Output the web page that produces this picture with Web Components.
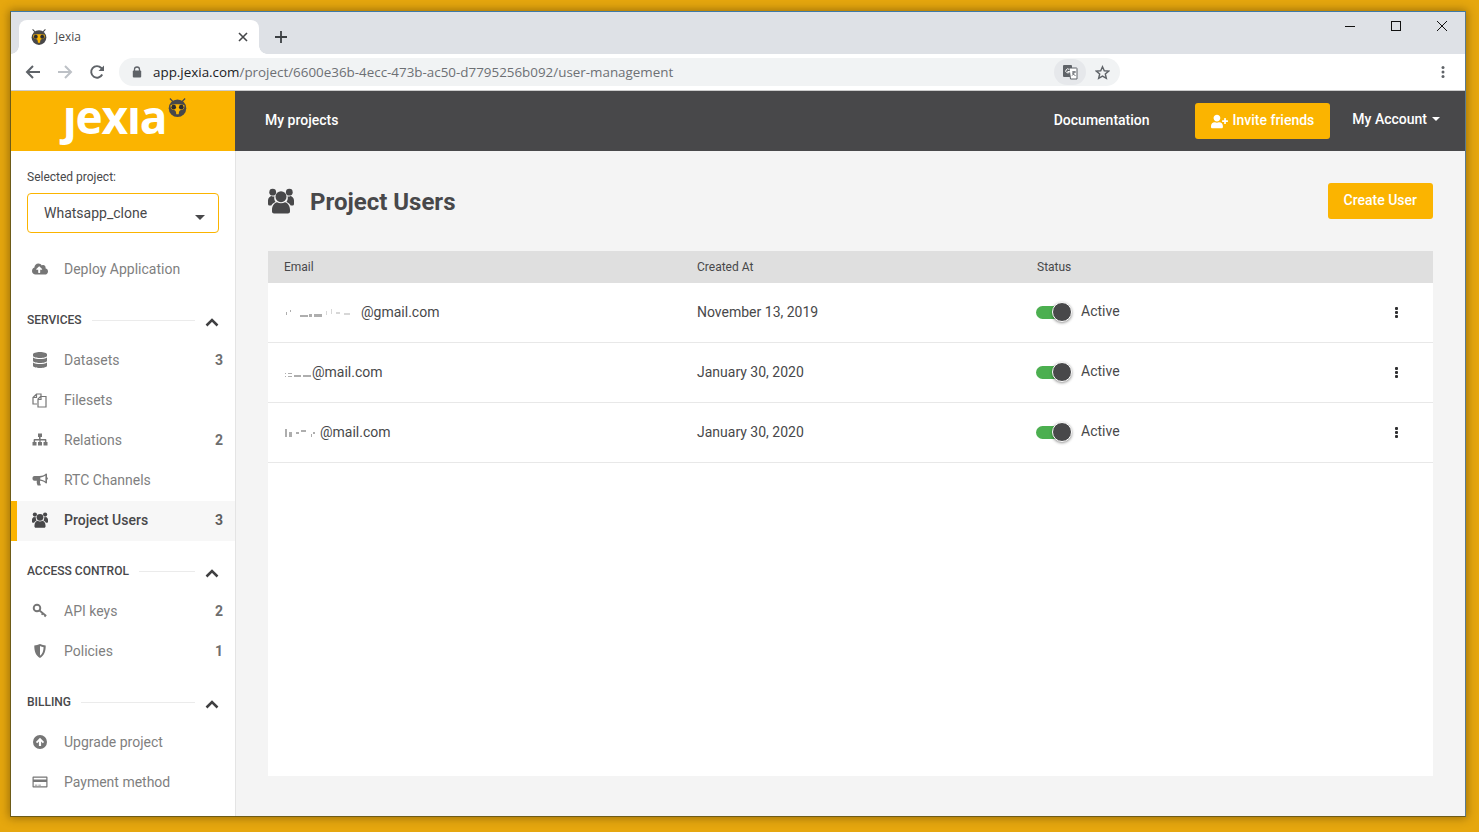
<!DOCTYPE html>
<html>
<head>
<meta charset="utf-8">
<title>Jexia</title>
<style>
  html, body { margin: 0; height: 100%; overflow: hidden; }
  body {
    background: #e6a70e;
    padding: 11px 0 0 10px;
    box-sizing: border-box;
    font-family: Roboto, "Liberation Sans", sans-serif;
  }
</style>
</head>
<body>
<app-window>
  <browser-tabs></browser-tabs>
  <browser-toolbar></browser-toolbar>
  <app-header></app-header>
  <app-body>
    <side-bar slot="side"></side-bar>
    <users-page slot="main"></users-page>
  </app-body>
</app-window>

<script>
const SIDE_BODY = 'M0 12c0-2.500 1.800-4.200 3.500-4.500.8.500 1.800.7 3 .5-.2.500-.3 1-.3 1.500 0 1.500.5 2.700 1.300 3.700C5.500 14.500 4 15.500 3.300 17H1.500C.5 17 0 16.300 0 15.500z';
const ICONS = {
  users: ['0 0 26 25', `<circle cx="4.700" cy="3.700" r="3.400"/><circle cx="21.300" cy="3.700" r="3.400"/><circle cx="13" cy="8.200" r="5.500"/>
    <path d="${SIDE_BODY}"/><path transform="matrix(-1 0 0 1 26 0)" d="${SIDE_BODY}"/>
    <path d="M4 21.500c0-4.500 2.500-7 5-7.700 1.200.7 2.500 1 4 1s2.800-.3 4-1c2.500.7 5 3.200 5 7.700V23c0 1.100-.9 2-2 2H6c-1.100 0-2-.9-2-2z"/>`],
  database: ['0 0 448 512', '<path d="M448 73.143v45.714C448 159.143 347.667 192 224 192S0 159.143 0 118.857V73.143C0 32.857 100.333 0 224 0s224 32.857 224 73.143zM448 176v102.857C448 319.143 347.667 352 224 352S0 319.143 0 278.857V176c48.125 33.143 136.208 48.572 224 48.572S399.874 209.143 448 176zm0 160v102.857C448 479.143 347.667 512 224 512S0 479.143 0 438.857V336c48.125 33.143 136.208 48.572 224 48.572S399.874 369.143 448 336z"/>'],
  cloud: ['0 0 640 512', '<path d="M537.6 226.6c4.1-10.7 6.4-22.4 6.4-34.6 0-53-43-96-96-96-19.7 0-38.1 6-53.3 16.2C367 64.2 315.3 32 256 32c-88.4 0-160 71.6-160 160 0 2.7.1 5.4.2 8.1C40.2 219.8 0 273.2 0 336c0 79.5 64.5 144 144 144h368c70.7 0 128-57.3 128-128 0-61.9-44-113.6-102.4-125.4zM393.4 288H328v112c0 8.8-7.2 16-16 16h-48c-8.8 0-16-7.2-16-16V288h-65.4c-14.3 0-21.4-17.2-11.3-27.3l105.4-105.4c6.2-6.2 16.4-6.2 22.6 0l105.4 105.4c10.1 10.1 2.9 27.3-11.3 27.3z"/>'],
  files: ['0 0 16 16', '<path fill="none" stroke="currentColor" stroke-width="1.200" d="M5 12H1V5.500L4.500 2H9v2.500M1 5.500h3.500V2M6 15V7l2.500-2.500H14V15zM6 7.500h3v-3"/>'],
  sitemap: ['0 0 16 16', '<path d="M6 1.500h4v3.600H8.600v2h5c.5 0 .8.300.8.800v2h1.100v3.600h-4V9.900h1.400V8.500H8.600v1.400H10v3.600H6V9.900h1.400V8.500H3.100v1.400h1.400v3.600h-4V9.900h1.100v-2c0-.5.300-.8.800-.8h4.600v-2H6z"/>'],
  bullhorn: ['0 0 16 16', '<path fill-rule="evenodd" d="M14.200 1.500c.5 0 .8.400.8.800v3c.6.200.9.700.9 1.200s-.3 1-.9 1.200v3c0 .5-.3.800-.8.800-.2 0-.4-.1-.5-.2C12.200 10 10.400 9 8 8.800v2c0 .6.300 1.200.7 1.700.3.400 0 1.100-.5 1.100H6.200c-.3 0-.6-.1-.7-.4-.4-.9-.8-1.800-.8-2.700 0-.6.100-1.200.2-1.700H2.500C1.400 8.800.500 8 .500 6.800V6c0-1.100.9-2 2-2h5c2.700 0 4.700-1 6.200-2.300.1-.1.300-.2.500-.2zm-.8 2.100C12 4.600 10.200 5.300 8.300 5.500v2.100c1.900.2 3.700.9 5.100 1.900z"/>'],
  key: ['0 0 16 16', '<circle cx="5" cy="5" r="3.300" fill="none" stroke="currentColor" stroke-width="1.900"/><path d="M7.500 7.500l6.700 5.500M11 10.200l-1.300 1.600M13.500 12.300l-1 1.300" fill="none" stroke="currentColor" stroke-width="1.800"/>'],
  shield: ['0 0 16 16', '<path fill-rule="evenodd" d="M8 1c2 .9 3.800 1.300 5.700 1.500.1 5.800-1.400 10-5.700 12.500-4.300-2.500-5.800-6.700-5.700-12.500C4.200 2.300 6 1.900 8 1zm0 2.100v9.700c2.500-1.900 3.500-4.900 3.600-8.500C10.800 4.100 9.300 3.700 8 3.100z"/>'],
  upgrade: ['0 0 16 16', '<path fill-rule="evenodd" d="M8 1a7 7 0 1 1 0 14A7 7 0 0 1 8 1zm0 2.800L3.900 7.900 5.200 9.200 6.900 7.500V12h2.200V7.500l1.700 1.700 1.300-1.300z"/>'],
  card: ['0 0 16 16', '<path fill-rule="evenodd" d="M1.500 2.500h13c.6 0 1 .4 1 1v9c0 .6-.4 1-1 1h-13c-.6 0-1-.4-1-1v-9c0-.6.4-1 1-1zm.2 1.200v1.800h12.600V3.700zm0 4.200v4.400h12.600V7.900zm1.100 2.900h2.600v.8H2.800zm3.500 0h2.600v.8H6.300z"/>'],
  userplus: ['0 0 640 512', '<path d="M624 208h-64v-64c0-8.800-7.200-16-16-16h-32c-8.800 0-16 7.200-16 16v64h-64c-8.800 0-16 7.200-16 16v32c0 8.800 7.200 16 16 16h64v64c0 8.800 7.200 16 16 16h32c8.800 0 16-7.200 16-16v-64h64c8.800 0 16-7.200 16-16v-32c0-8.800-7.200-16-16-16zm-400 48c70.700 0 128-57.300 128-128S294.700 0 224 0 96 57.300 96 128s57.300 128 128 128zm89.600 32h-16.700c-22.200 10.200-46.900 16-72.900 16s-50.600-5.800-72.900-16h-16.700C60.200 288 0 348.200 0 422.400V464c0 26.500 21.500 48 48 48h352c26.500 0 48-21.500 48-48v-41.600c0-74.200-60.200-134.400-134.400-134.400z"/>']
};

class JxIcon extends HTMLElement {
  connectedCallback() {
    const [box, body] = ICONS[this.getAttribute("name")];
    const size = this.getAttribute("size") || 16;
    this.attachShadow({mode: "open"}).innerHTML = `
      <style>
        :host { display: inline-flex; align-items: center; justify-content: center; width: ${size}px; height: ${size}px; }
        svg { width: 100%; height: 100%; fill: currentColor; display: block; }
      </style>
      <svg viewBox="${box}">${body}</svg>`;
  }
}
customElements.define("jx-icon", JxIcon);

class OwlMark extends HTMLElement {
  connectedCallback() {
    const size = this.getAttribute("size") || 18;
    this.attachShadow({mode: "open"}).innerHTML = `
      <style>
        :host { display: inline-block; width: ${size}px; height: ${size}px; }
        svg { width: 100%; height: 100%; display: block; }
      </style>
      <svg viewBox="0 0 18 18">
        <path d="M1.800 .5 5 3.800M16.200 .5 13 3.800" stroke="#48484a" stroke-width="1.200" fill="none"/>
        <circle cx="9" cy="9.700" r="8.300" fill="#48484a"/>
        <path d="M2.600 6.600C6 5.600 12 5.600 15.400 6.600 16 9 14.800 11.300 12.600 11.300 11 11.300 10.300 12.400 10.200 15.500H7.800C7.700 12.400 7 11.300 5.400 11.300 3.200 11.300 2 9 2.600 6.600z" fill="#fbb400"/>
        <circle cx="5.400" cy="8.700" r="2.200" fill="#2c2c2e"/>
        <circle cx="12.600" cy="8.700" r="2.200" fill="#2c2c2e"/>
      </svg>`;
  }
}
customElements.define("owl-mark", OwlMark);

class AppWindow extends HTMLElement {
  constructor() {
    super();
    this.attachShadow({mode: "open"}).innerHTML = `
      <style>
        :host {
          display: flex;
          flex-direction: column;
          width: 1454px;
          height: 804px;
          border: 1px solid #6d5b18;
          border-top-color: #3f7aa6;
          border-right-color: #5b7a8c;
          box-shadow: 0 0 9px 1px rgba(60, 40, 0, .45);
          background: #fff;
          overflow: hidden;
        }
      </style>
      <slot></slot>`;
  }
}
customElements.define("app-window", AppWindow);

class BrowserTabs extends HTMLElement {
  connectedCallback() {
    this.attachShadow({mode: "open"}).innerHTML = `
      <style>
        :host { display: flex; height: 42px; flex: none; background: #dee1e6; padding: 8px 0 0 8px; box-sizing: border-box; position: relative; }
        .tab {
          width: 240px; height: 34px; background: #fff; border-radius: 8px 8px 0 0;
          display: flex; align-items: center; box-sizing: border-box; padding: 0 11px 0 12px;
          position: relative;
        }
        .tab::before, .tab::after { content: ""; position: absolute; bottom: 0; width: 8px; height: 8px; }
        .tab::before { left: -8px; background: radial-gradient(circle at 0 0, #dee1e6 7.500px, #fff 8px); }
        .tab::after { right: -8px; background: radial-gradient(circle at 100% 0, #dee1e6 7.500px, #fff 8px); }
        .title { font: 12px/16px "Open Sans", "Noto Sans", sans-serif; color: #4a4a4c; margin: 0 0 0 8px; flex: 1; }
        svg { display: block; }
        .plus { margin: 10px 0 0 15px; }
        .controls { position: absolute; right: 0; top: 0; display: flex; }
        .controls div { width: 46px; height: 28px; display: flex; align-items: center; justify-content: center; }
      </style>
      <div class="tab">
        <owl-mark size="16"></owl-mark>
        <span class="title">Jexia</span>
        <svg width="10" height="10" viewBox="0 0 10 10"><path d="M1 1l8 8M9 1l-8 8" stroke="#45474a" stroke-width="1.600"/></svg>
      </div>
      <svg class="plus" width="14" height="14" viewBox="0 0 14 14"><path d="M7 1v12M1 7h12" stroke="#3c4043" stroke-width="1.800"/></svg>
      <div class="controls">
        <div><svg width="10" height="10" viewBox="0 0 10 10"><path d="M0 5.500h10" stroke="#111" stroke-width="1"/></svg></div>
        <div><svg width="10" height="10" viewBox="0 0 10 10"><rect x=".5" y=".5" width="9" height="9" fill="none" stroke="#111"/></svg></div>
        <div><svg width="10" height="10" viewBox="0 0 10 10"><path d="M0 0l10 10M10 0L0 10" stroke="#111" stroke-width="1"/></svg></div>
      </div>`;
  }
}
customElements.define("browser-tabs", BrowserTabs);

class BrowserToolbar extends HTMLElement {
  connectedCallback() {
    this.attachShadow({mode: "open"}).innerHTML = `
      <style>
        :host { display: flex; align-items: center; height: 37px; flex: none; box-sizing: border-box; background: #fff; border-bottom: 1px solid #ccc; padding: 0 0 0 6px; }
        svg { display: block; flex: none; }
        .nav { width: 32px; display: flex; justify-content: center; }
        .omni {
          width: 1001px; height: 28px; border-radius: 14px; background: #f1f3f4; margin-left: 6px;
          display: flex; align-items: center; box-sizing: border-box; padding: 0 2px 0 13px;
        }
        .url { font: 13.400px/28px "Open Sans", "Noto Sans", sans-serif; color: #6d7074; margin-left: 11px; flex: 1; white-space: nowrap; }
        .url b { font-weight: 400; color: #202124; }
        .translate { width: 32px; height: 26px; background: #e6e8eb; border-radius: 13px; display: flex; align-items: center; justify-content: center; }
        .star { width: 32px; display: flex; justify-content: center; }
        .more { margin-left: 321px; }
      </style>
      <div class="nav"><svg width="16" height="16" viewBox="0 0 16 16"><path d="M15 8H2M8 2L2 8l6 6" fill="none" stroke="#5f6368" stroke-width="2"/></svg></div>
      <div class="nav"><svg width="16" height="16" viewBox="0 0 16 16"><path d="M1 8h13M8 2l6 6-6 6" fill="none" stroke="#bdc1c6" stroke-width="2"/></svg></div>
      <div class="nav"><svg width="16" height="16" viewBox="0 0 16 16"><path d="M13.200 10.500A5.800 5.800 0 1 1 12.300 4L14 6" fill="none" stroke="#5f6368" stroke-width="1.900"/><path d="M15 1.500V7H9.500z" fill="#5f6368"/></svg></div>
      <div class="omni">
        <svg width="10" height="12" viewBox="0 0 10 12"><path d="M2.500 5V3.500a2.500 2.500 0 0 1 5 0V5" fill="none" stroke="#5f6368" stroke-width="1.300"/><rect x=".8" y="4.600" width="8.400" height="7" rx="1" fill="#5f6368"/></svg>
        <div class="url"><b>app.jexia.com</b>/project/6600e36b-4ecc-473b-ac50-d7795256b092/user-management</div>
        <div class="translate">
          <svg width="16" height="16" viewBox="0 0 16 16"><rect x="1" y="1" width="9" height="12" rx="1" fill="#5f6368"/><path d="M7 4h7.500c.3 0 .5.200.5.500V15H8.500z" fill="#fff" stroke="#5f6368"/><path d="M7.200 5.500a2 2 0 1 0 .5 2H5.500" fill="none" stroke="#fff" stroke-width="1"/><path d="M10 8h4M12 7v1c0 2-1 3-2.200 3.500M10.500 9c.5 1 1.500 2 3 2.500" fill="none" stroke="#5f6368"/></svg>
        </div>
        <div class="star"><svg width="15" height="15" viewBox="0 0 16 16"><path d="M8 1.800l1.900 4.300 4.700.4-3.600 3.100 1.100 4.600L8 11.800 3.900 14.200 5 9.600 1.400 6.500l4.700-.4z" fill="none" stroke="#5f6368" stroke-width="1.500"/></svg></div>
      </div>
      <svg class="more" width="4" height="14" viewBox="0 0 4 14"><circle cx="2" cy="2.500" r="1.500" fill="#5f6368"/><circle cx="2" cy="7" r="1.500" fill="#5f6368"/><circle cx="2" cy="11.500" r="1.500" fill="#5f6368"/></svg>`;
  }
}
customElements.define("browser-toolbar", BrowserToolbar);

class JxButton extends HTMLElement {
  constructor() {
    super();
    this.attachShadow({mode: "open"}).innerHTML = `
      <style>
        :host {
          display: inline-flex; align-items: center; height: 36px; padding: 0 16px 2px; box-sizing: border-box;
          background: #fbb400; color: #fff; border-radius: 3px; font: 500 14px Roboto, sans-serif; white-space: nowrap;
        }
      </style>
      <slot></slot>`;
  }
}
customElements.define("jx-button", JxButton);

class AppHeader extends HTMLElement {
  connectedCallback() {
    this.attachShadow({mode: "open"}).innerHTML = `
      <style>
        :host { display: flex; height: 60px; flex: none; background: #48484a; color: #fff; font: 500 14px Roboto, sans-serif; }
        .brand { width: 224px; background: #fbb400; display: flex; justify-content: center; align-items: flex-start; flex: none; position: relative; }
        .word { font: 700 46px/1 "Open Sans", Roboto, sans-serif; letter-spacing: -1.200px; margin: 2px 0 0 -17px; color: #fff; }
        .brand owl-mark { position: absolute; left: 157px; top: 7px; }
        .links { flex: 1; display: flex; align-items: center; padding-left: 30px; }
        .text { margin-top: -2px; }
        .spacer { flex: 1; }
        jx-icon { margin: 2px 5px 0 0; }
        .invite { margin-left: 45px; }
        .account { margin: -5px 25px 0 22px; display: flex; align-items: center; }
        .caret { width: 0; height: 0; border: 4.500px solid transparent; border-top-color: #fff; border-bottom: 0; margin-left: 5px; }
      </style>
      <div class="brand"><span class="word">ȷexıa</span><owl-mark size="19"></owl-mark></div>
      <div class="links">
        <span class="text">My projects</span>
        <span class="spacer"></span>
        <span class="text">Documentation</span>
        <jx-button class="invite"><jx-icon name="userplus" size="17"></jx-icon>Invite friends</jx-button>
        <span class="account">My Account<span class="caret"></span></span>
      </div>`;
  }
}
customElements.define("app-header", AppHeader);

class AppBody extends HTMLElement {
  constructor() {
    super();
    this.attachShadow({mode: "open"}).innerHTML = `
      <style>
        :host { display: flex; flex: 1; min-height: 0; background: #f4f4f4; }
      </style>
      <slot name="side"></slot><slot name="main"></slot>`;
  }
}
customElements.define("app-body", AppBody);

class NavItem extends HTMLElement {
  connectedCallback() {
    const count = this.getAttribute("count") || "";
    this.attachShadow({mode: "open"}).innerHTML = `
      <style>
        :host {
          display: flex; align-items: center; height: 40px; box-sizing: border-box; padding: 0 12px 2px 21px;
          color: #7f7f7f; font: 400 14px Roboto, sans-serif;
        }
        :host([active]) { background: #f7f7f7; box-shadow: inset 6px 0 0 #fbb400; color: #48484a; font-weight: 500; }
        jx-icon { color: #767676; margin-right: 16px; }
        :host([active]) jx-icon { color: #48484a; }
        .label { flex: 1; }
        .count { font-weight: 700; color: #6e6e6e; }
        :host([active]) .count { color: #5e5e5e; }
      </style>
      <jx-icon name="${this.getAttribute("icon")}"></jx-icon>
      <span class="label"><slot></slot></span>
      <span class="count">${count}</span>`;
  }
}
customElements.define("nav-item", NavItem);

class NavSection extends HTMLElement {
  connectedCallback() {
    this.attachShadow({mode: "open"}).innerHTML = `
      <style>
        :host { display: block; padding-top: 19px; }
        .head { display: flex; align-items: center; height: 24px; margin: 0 16px 8px; padding-bottom: 2px; box-sizing: border-box; color: #48484a; font: 500 12px Roboto, sans-serif; }
        .line { flex: 1; height: 1px; background: #ebebeb; margin: 0 10px 0 10px; }
        svg { display: block; margin: 4px 0 0 0; }
      </style>
      <div class="head">
        <span>${this.getAttribute("heading")}</span>
        <span class="line"></span>
        <svg width="14" height="9" viewBox="0 0 14 9"><path d="M1.500 7.500L7 2l5.500 5.500" fill="none" stroke="#3f3f41" stroke-width="2.500"/></svg>
      </div>
      <slot></slot>`;
  }
}
customElements.define("nav-section", NavSection);

class SideBar extends HTMLElement {
  connectedCallback() {
    this.attachShadow({mode: "open"}).innerHTML = `
      <style>
        :host { display: block; width: 225px; flex: none; box-sizing: border-box; background: #fff; border-right: 1px solid #e4e4e4; padding-top: 19px; overflow: hidden; }
        .label { font: 12px/14px Roboto, sans-serif; color: #48484a; margin: 0 16px 9px; }
        .select {
          margin: 0 16px 17px; height: 40px; box-sizing: border-box; border: 1px solid #fbb400; border-radius: 4px;
          display: flex; align-items: center; padding: 0 13px 0 16px; font: 14px Roboto, sans-serif; color: #48484a;
        }
        .select span { flex: 1; margin-top: -1px; }
        .select i { width: 0; height: 0; border: 5px solid transparent; border-top-color: #48484a; border-bottom: 0; margin-top: 9px; }
      </style>
      <div class="label">Selected project:</div>
      <div class="select"><span>Whatsapp_clone</span><i></i></div>
      <nav-item icon="cloud">Deploy Application</nav-item>
      <nav-section heading="SERVICES">
        <nav-item icon="database" count="3">Datasets</nav-item>
        <nav-item icon="files">Filesets</nav-item>
        <nav-item icon="sitemap" count="2">Relations</nav-item>
        <nav-item icon="bullhorn">RTC Channels</nav-item>
        <nav-item icon="users" count="3" active>Project Users</nav-item>
      </nav-section>
      <nav-section heading="ACCESS CONTROL">
        <nav-item icon="key" count="2">API keys</nav-item>
        <nav-item icon="shield" count="1">Policies</nav-item>
      </nav-section>
      <nav-section heading="BILLING">
        <nav-item icon="upgrade">Upgrade project</nav-item>
        <nav-item icon="card">Payment method</nav-item>
      </nav-section>`;
  }
}
customElements.define("side-bar", SideBar);

class StatusToggle extends HTMLElement {
  constructor() {
    super();
    this.attachShadow({mode: "open"}).innerHTML = `
      <style>
        :host { display: inline-block; position: relative; width: 36px; height: 20px; }
        .track { position: absolute; left: 0; top: 4px; width: 30px; height: 13px; border-radius: 7px; background: #4caf50; }
        .knob {
          position: absolute; right: 0; top: 0; width: 18px; height: 18px; border-radius: 50%;
          background: #48484a; border: 1px solid #fff; box-shadow: 0 1px 3px rgba(0,0,0,.45);
        }
      </style>
      <div class="track"></div><div class="knob"></div>`;
  }
}
customElements.define("status-toggle", StatusToggle);

class UserRow extends HTMLElement {
  connectedCallback() {
    // the reference has the start of each address rubbed out, only these flecks are left
    const marks = {
      a: '<path d="M2 9h1v3H2zM6 7h1v2H6zM16 12h8v2h-8zM25 11h3v3h-3zM30 11h8v3h-8z"/><path fill-opacity=".35" d="M42 8h1v4h-1zM47 6h1v5h-1zM52 9h4v2h-4zM60 10h6v2h-6z"/>',
      b: '<path d="M1 10h1v1H1zM1 13h1v1H1zM4 10h4v1H4zM4 13h4v1H4zM10 12h7v2h-7zM19 12h8v2h-8z"/>',
      c: '<path d="M1 6h2v8H1zM5 9h3v5H5zM12 9h3v2h-3zM17 7h5v2h-5zM27 11h1v3h-1zM29 9h2v2h-2z"/>'
    };
    const mark = this.getAttribute("mark");
    const width = this.getAttribute("mark-width");
    this.attachShadow({mode: "open"}).innerHTML = `
      <style>
        :host {
          display: grid; grid-template-columns: 413px 340px 1fr 38px; align-items: center; height: 60px; box-sizing: border-box;
          padding-left: 16px; border-bottom: 1px solid #e8e8e8; font: 14px Roboto, sans-serif; color: #48484a;
        }
        .mail { display: flex; align-items: center; margin-top: -2px; }
        .mail svg { display: block; fill: #8c8c8c; fill-opacity: .7; }
        .date { margin-top: -2px; }
        .status { display: flex; align-items: center; gap: 9px; margin: -1px 0 0 -1px; }
        .status span { margin-top: -2px; }
        .more { display: flex; flex-direction: column; gap: 1px; width: 3px; }
        .more i { width: 3px; height: 3px; border-radius: 1px; background: #2f2f31; }
      </style>
      <div class="mail"><svg width="${width}" height="18" viewBox="0 0 ${width} 18">${marks[mark]}</svg><span>${this.getAttribute("domain")}</span></div>
      <div class="date">${this.getAttribute("created")}</div>
      <div class="status"><status-toggle></status-toggle><span>Active</span></div>
      <div class="more"><i></i><i></i><i></i></div>`;
  }
}
customElements.define("user-row", UserRow);

class UsersPage extends HTMLElement {
  connectedCallback() {
    this.attachShadow({mode: "open"}).innerHTML = `
      <style>
        :host { display: flex; flex-direction: column; flex: 1; min-width: 0; box-sizing: border-box; padding: 32px 32px 40px; }
        .top { display: flex; align-items: center; height: 36px; margin-bottom: 32px; color: #48484a; }
        h1 { flex: 1; margin: 0 0 0 16px; font: 700 24px/36px Roboto, sans-serif; padding-top: 2px; }
        .table { flex: 1; background: #fff; }
        .thead {
          display: grid; grid-template-columns: 413px 340px 1fr; align-items: center; height: 32px; padding-left: 16px;
          background: #dfdfdf; color: #48484a; font: 12px Roboto, sans-serif;
        }
      </style>
      <div class="top">
        <jx-icon name="users" size="26"></jx-icon>
        <h1>Project Users</h1>
        <jx-button>Create User</jx-button>
      </div>
      <div class="table">
        <div class="thead"><span>Email</span><span>Created At</span><span>Status</span></div>
        <user-row mark="a" mark-width="77" domain="@gmail.com" created="November 13, 2019"></user-row>
        <user-row mark="b" mark-width="28" domain="@mail.com" created="January 30, 2020"></user-row>
        <user-row mark="c" mark-width="36" domain="@mail.com" created="January 30, 2020"></user-row>
      </div>`;
  }
}
customElements.define("users-page", UsersPage);
</script>
</body>
</html>
